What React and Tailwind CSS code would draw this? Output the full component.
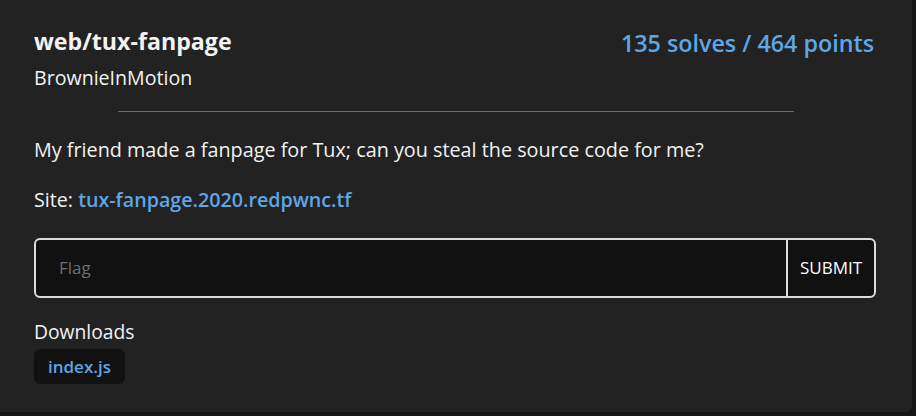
const App = () => {
  return (
    <div className="h-[416px] w-full bg-[#161616] overflow-hidden" style={{ fontFamily: '"Open Sans", "Noto Sans", sans-serif' }}>
      <div className="w-[912px] h-[412px] bg-[#222222] rounded-br-[6px] px-[34px] pt-[27px] text-[#f2f2f2]">
        <div className="flex items-start justify-between">
          <div>
            <h1 className="text-[23.2px] font-bold leading-[28px]">web/tux-fanpage</h1>
            <p className="mt-[11px] text-[19.6px] leading-[24px]">BrownieInMotion</p>
          </div>
          <div className="text-[23.3px] font-semibold leading-[28px] text-[#5fa6e6] pr-[4px] pt-[2px]">135 solves / 464 points</div>
        </div>
        <div className="mx-auto mt-[21px] w-[80%] border-t border-[#6b6b6b]" />
        <p className="mt-[26px] text-[19.8px] leading-[24px]">My friend made a fanpage for Tux; can you steal the source code for me?</p>
        <p className="mt-[26px] text-[19.7px] leading-[24px]">
          Site: <a className="font-semibold text-[#5fa6e6]">tux-fanpage.2020.redpwnc.tf</a>
        </p>
        <div className="mt-[26px] flex h-[60px] w-[842px] rounded-[6px] border-2 border-[#dcdcdc] bg-[#111111] overflow-hidden">
          <input placeholder="Flag" className="flex-1 bg-transparent px-[23px] text-[17px] text-white placeholder:text-[#6e6e6e] outline-none" />
          <button className="w-[88px] border-l-2 border-[#dcdcdc] text-[17px] text-white">SUBMIT</button>
        </div>
        <p className="mt-[22px] text-[19.3px] leading-[24px]">Downloads</p>
        <div className="mt-[5px]">
          <span className="inline-flex h-[35px] items-center rounded-[6px] bg-[#111111] px-[14px] text-[17px] font-semibold text-[#5fa6e6]">index.js</span>
        </div>
      </div>
    </div>
  );
};

export default App;
